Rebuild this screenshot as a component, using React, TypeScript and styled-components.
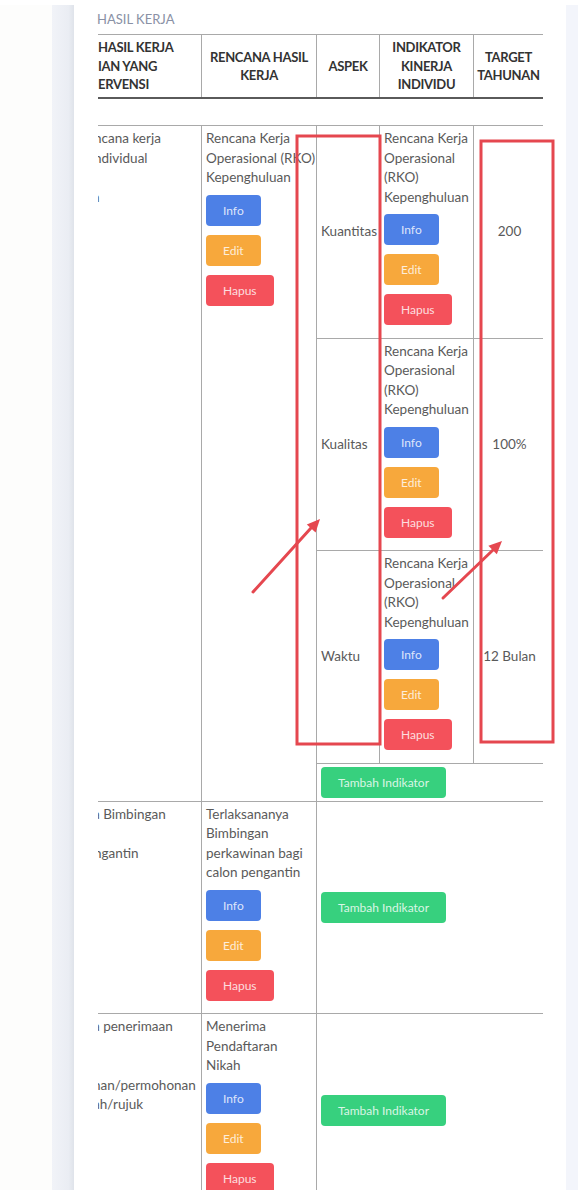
import React from "react";
import styled, { createGlobalStyle } from "styled-components";

const GlobalStyle = createGlobalStyle`
  html, body {
    margin: 0;
    padding: 0;
    background: #ffffff;
  }
  body {
    font-family: "Lato", "Open Sans", sans-serif;
  }
`;

const Screen = styled.div`
  position: relative;
  width: 578px;
  height: 1190px;
  padding-top: 5px;
  box-sizing: border-box;
  display: flex;
  overflow: hidden;
  background: #ffffff;
`;

const Gutter = styled.div`
  width: 52px;
  flex-shrink: 0;
  background: #fdfdfc;
`;

const SideStrip = styled.div`
  width: 22px;
  flex-shrink: 0;
  background: linear-gradient(to right, #f1f3f8, #eaedf3 75%, #dfe3ea);
`;

const Card = styled.main`
  width: 492px;
  flex-shrink: 0;
  box-sizing: border-box;
  padding: 0 23px;
  background: #ffffff;
`;

const EdgeStrip = styled.div`
  flex: 1;
  background: #f3f5fb;
`;

const Title = styled.h4`
  margin: 0 0 7px;
  padding-top: 6px;
  font: 400 13px/16px "Lato", sans-serif;
  color: #8a91a5;
  text-transform: uppercase;
`;

const TableClip = styled.div`
  margin-left: 1px;
  overflow: hidden;
`;

const Table = styled.table`
  border-collapse: collapse;
  table-layout: fixed;
  width: 448px;
  margin-left: -2px;
  font-size: 13.5px;
  line-height: 19.5px;
  color: #5a5a5a;
`;

const HeadCell = styled.th<{ $align?: string }>`
  border: 1px solid #a9a9a9;
  border-bottom: 2px solid #5a5a5a;
  padding: 3px 1px;
  height: 56px;
  font: 700 13px/18.5px "Lato", sans-serif;
  letter-spacing: -0.3px;
  color: #333333;
  text-align: ${(p) => p.$align ?? "center"};
  vertical-align: middle;
  white-space: nowrap;
  overflow: hidden;
`;

const Cell = styled.td<{ $align?: string; $valign?: string; $clip?: boolean }>`
  border: 1px solid #a9a9a9;
  padding: ${(p) => (p.$clip ? "3px 0" : "3px 2px 3px 4px")};
  text-align: ${(p) => p.$align ?? "left"};
  vertical-align: ${(p) => p.$valign ?? "top"};
  overflow: hidden;
`;

const SpacerCell = styled.td`
  border: 1px solid #a9a9a9;
  height: 26px;
  padding: 0;
`;

const Frag = styled.span<{ $cut: number }>`
  display: block;
  white-space: nowrap;
  margin-left: -${(p) => p.$cut}px;
`;

const Lines = styled.div`
  white-space: nowrap;
`;

const ButtonStack = styled.div`
  display: flex;
  flex-direction: column;
  align-items: flex-start;
  gap: 9px;
  margin-top: 7px;
  padding-bottom: 9.5px;
`;

const colors: Record<string, string> = {
  info: "#4d80e6",
  edit: "#f7a83c",
  hapus: "#f4515b",
  tambah: "#37d07e",
};

const ActionButton = styled.button<{ $kind: string }>`
  height: 31px;
  padding: 0 17px;
  border: none;
  border-radius: 4px;
  background: ${(p) => colors[p.$kind]};
  color: rgba(255, 255, 255, 0.82);
  font: 400 12px "Lato", sans-serif;
  cursor: pointer;
`;

const Overlay = styled.svg`
  position: absolute;
  top: 0;
  left: 0;
  width: 578px;
  height: 1200px;
  pointer-events: none;
`;

type Indikator = { aspek: string; target: string };

type Group = {
  hasil: [string, number][];
  rencana: string[];
  indikator: Indikator[];
};

const rkoLines = ["Rencana Kerja", "Operasional", "(RKO)", "Kepenghuluan"];

const groups: Group[] = [
  {
    hasil: [
      ["ncana kerja", 3],
      ["ndividual", 3],
      ["\u00a0", 0],
      ["n", 5],
    ],
    rencana: ["Rencana Kerja", "Operasional (RKO)", "Kepenghuluan"],
    indikator: [
      { aspek: "Kuantitas", target: "200" },
      { aspek: "Kualitas", target: "100%" },
      { aspek: "Waktu", target: "12 Bulan" },
    ],
  },
  {
    hasil: [
      ["a Bimbingan", 4],
      ["\u00a0", 0],
      ["ngantin", 3],
    ],
    rencana: ["Terlaksananya", "Bimbingan", "perkawinan bagi", "calon pengantin"],
    indikator: [],
  },
  {
    hasil: [
      ["a penerimaan", 4],
      ["\u00a0", 0],
      ["\u00a0", 0],
      ["nan/permohonan", 4],
      ["ah/rujuk", 4],
    ],
    rencana: ["Menerima", "Pendaftaran", "Nikah"],
    indikator: [],
  },
];

const Actions: React.FC = () => (
  <ButtonStack>
    <ActionButton $kind="info">Info</ActionButton>
    <ActionButton $kind="edit">Edit</ActionButton>
    <ActionButton $kind="hapus">Hapus</ActionButton>
  </ButtonStack>
);

const TextLines: React.FC<{ lines: string[] }> = ({ lines }) => (
  <Lines>
    {lines.map((l, i) => (
      <div key={i}>{l}</div>
    ))}
  </Lines>
);

const GroupRows: React.FC<{ group: Group }> = ({ group }) => {
  const span = group.indikator.length + 1;
  const hasil = (
    <Cell $clip rowSpan={span}>
      {group.hasil.map(([t, cut], i) => (
        <Frag key={i} $cut={cut}>
          {t}
        </Frag>
      ))}
    </Cell>
  );
  const rencana = (
    <Cell rowSpan={span}>
      <TextLines lines={group.rencana} />
      <Actions />
    </Cell>
  );

  if (group.indikator.length === 0) {
    return (
      <tr>
        {hasil}
        {rencana}
        <Cell colSpan={3} $valign="middle">
          <ActionButton $kind="tambah">Tambah Indikator</ActionButton>
        </Cell>
      </tr>
    );
  }

  return (
    <>
      {group.indikator.map((ind, i) => (
        <tr key={ind.aspek}>
          {i === 0 && hasil}
          {i === 0 && rencana}
          <Cell $valign="middle">{ind.aspek}</Cell>
          <Cell>
            <TextLines lines={rkoLines} />
            <Actions />
          </Cell>
          <Cell $valign="middle" $align="center">
            {ind.target}
          </Cell>
        </tr>
      ))}
      <tr>
        <Cell colSpan={3}>
          <ActionButton $kind="tambah">Tambah Indikator</ActionButton>
        </Cell>
      </tr>
    </>
  );
};

const Annotations: React.FC = () => (
  <Overlay viewBox="0 0 578 1200">
    <g fill="none" stroke="#e5474f" strokeWidth="3" strokeLinecap="round">
      <rect x="297" y="136" width="83" height="608" />
      <rect x="481" y="141" width="72" height="601" />
      <line x1="253" y1="592" x2="311" y2="528" />
      <line x1="443" y1="598" x2="493" y2="550" />
    </g>
    <g fill="#e5474f">
      <polygon points="320,519 315.6,532.6 306.8,524.6" />
      <polygon points="502,541 496.8,554.3 488.4,545.7" />
    </g>
  </Overlay>
);

export default function App() {
  return (
    <>
      <GlobalStyle />
      <Screen>
        <Gutter />
        <SideStrip />
        <Card>
          <Title>Hasil Kerja</Title>
          <TableClip>
            <Table>
              <colgroup>
                <col style={{ width: 105 }} />
                <col style={{ width: 115 }} />
                <col style={{ width: 63 }} />
                <col style={{ width: 94 }} />
                <col style={{ width: 70 }} />
              </colgroup>
              <thead>
                <tr>
                  <HeadCell $align="left">
                    <Frag $cut={-3}>HASIL KERJA</Frag>
                    <Frag $cut={0}>IAN YANG</Frag>
                    <Frag $cut={0}>ERVENSI</Frag>
                  </HeadCell>
                  <HeadCell>
                    RENCANA HASIL
                    <br />
                    KERJA
                  </HeadCell>
                  <HeadCell>ASPEK</HeadCell>
                  <HeadCell>
                    INDIKATOR
                    <br />
                    KINERJA
                    <br />
                    INDIVIDU
                  </HeadCell>
                  <HeadCell>
                    TARGET
                    <br />
                    TAHUNAN
                  </HeadCell>
                </tr>
              </thead>
              <tbody>
                <tr>
                  <SpacerCell colSpan={5} />
                </tr>
                {groups.map((g, i) => (
                  <GroupRows key={i} group={g} />
                ))}
              </tbody>
            </Table>
          </TableClip>
        </Card>
        <EdgeStrip />
      </Screen>
      <Annotations />
    </>
  );
}
